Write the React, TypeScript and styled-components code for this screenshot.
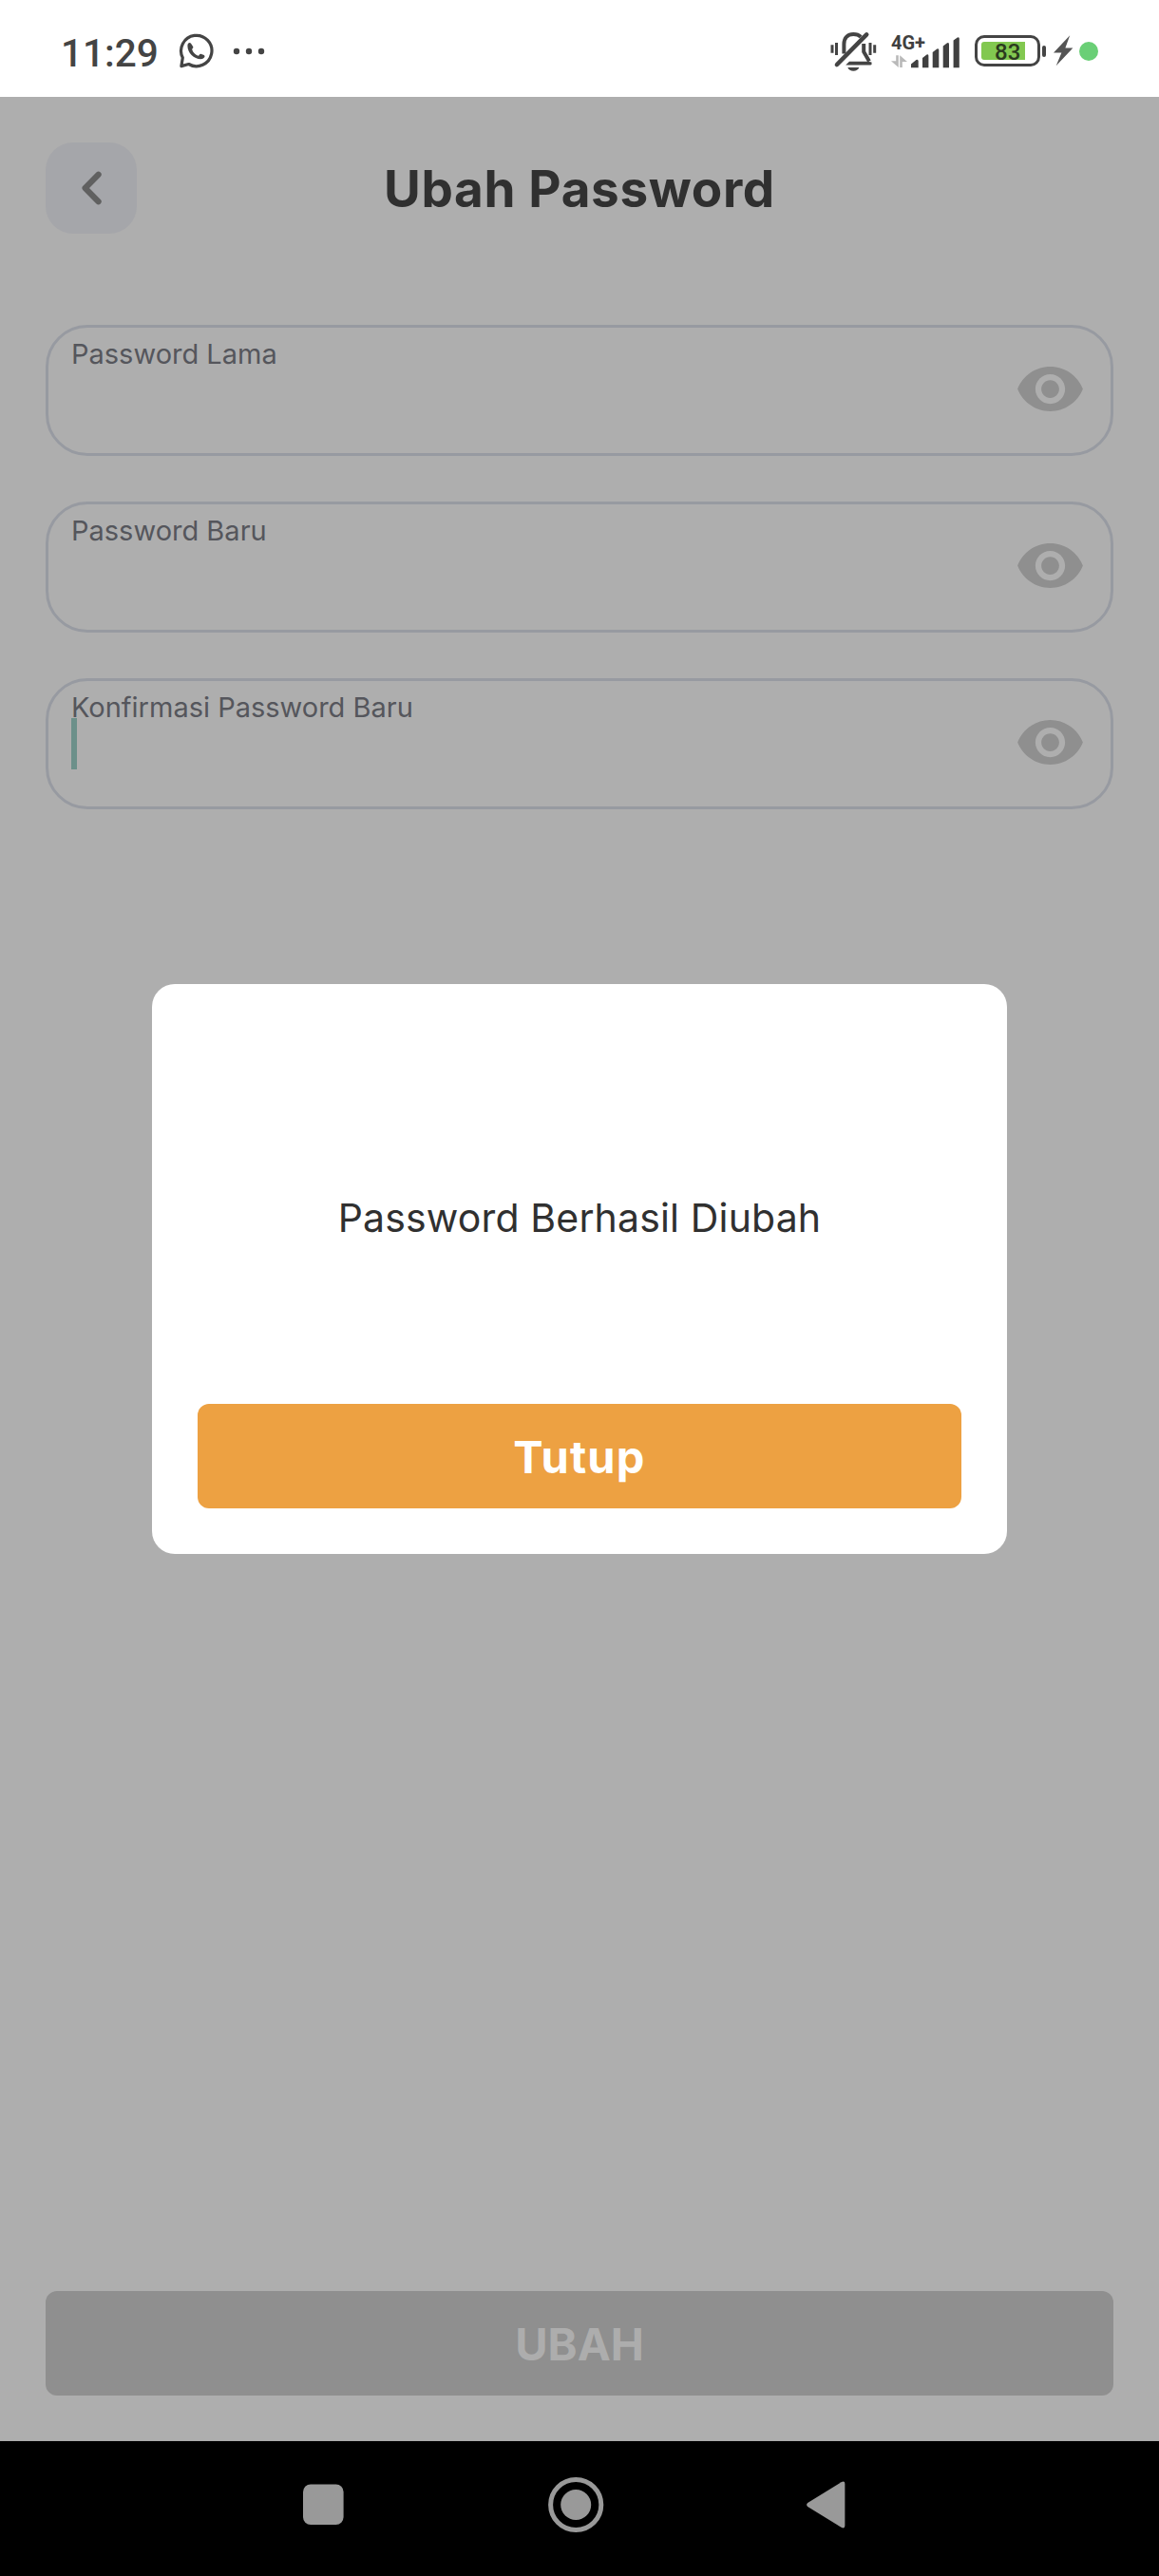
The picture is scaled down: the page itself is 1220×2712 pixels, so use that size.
import React from 'react';
import styled, { createGlobalStyle } from 'styled-components';

const GlobalStyle = createGlobalStyle`
  *, *::before, *::after { box-sizing: border-box; }
  body { margin: 0; background: #aeaeae; }
  button { font: inherit; border: 0; padding: 0; margin: 0; }
`;

const uiFont = `Inter, "Noto Sans", sans-serif`;
const systemFont = `Roboto, "Noto Sans", sans-serif`;

const Phone = styled.div`
  position: relative;
  display: flex;
  flex-direction: column;
  width: 1220px;
  height: 2712px;
  overflow: hidden;
  background: #aeaeae;
  font-family: ${uiFont};
`;

/* ---------- status bar ---------- */

const StatusBar = styled.header`
  display: flex;
  align-items: center;
  justify-content: space-between;
  flex: none;
  height: 102px;
  padding: 5px 64px 0 64px;
  background: #fff;
  color: #444;
  font-family: ${systemFont};
`;

const StatusGroup = styled.div`
  display: flex;
  align-items: center;
`;

const Clock = styled.span`
  width: 103px;
  padding-top: 4px;
  font-size: 40.5px;
  line-height: 48px;
  font-weight: 460;
  white-space: nowrap;
`;

const StatusIcon = styled.svg<{ $gap?: number }>`
  display: block;
  flex: none;
  margin-left: ${(p) => p.$gap ?? 0}px;
`;

const NetworkLabel = styled.text`
  font: 700 20px ${systemFont};
  fill: #404040;
`;

const Battery = styled.div`
  position: relative;
  width: 69px;
  height: 33px;
  margin-left: 15px;
  padding: 4px;
  border: 3px solid #444;
  border-radius: 10px;
`;

const BatteryCharge = styled.div<{ $level: number }>`
  width: ${(p) => p.$level}%;
  height: 19px;
  border-radius: 3px 0 0 3px;
  background: #82c850;
`;

const BatteryLabel = styled.span`
  position: absolute;
  left: 18px;
  top: 1px;
  font-size: 24px;
  line-height: 28px;
  font-weight: 460;
  color: #2b3a1e;
`;

const BatteryTip = styled.div`
  width: 4px;
  height: 12px;
  margin-left: 2px;
  border-radius: 2px;
  background: #444;
`;

const ActiveDot = styled.div`
  width: 20px;
  height: 20px;
  margin-left: 6px;
  border-radius: 50%;
  background: #6acf76;
`;

/* ---------- screen ---------- */

const Screen = styled.main`
  display: flex;
  flex-direction: column;
  flex: 1;
  padding: 48px;
`;

const TitleBar = styled.div`
  display: grid;
  grid-template-columns: 96px 1fr 96px;
  align-items: center;
  height: 96px;
`;

const BackButton = styled.button`
  display: flex;
  align-items: center;
  justify-content: center;
  width: 96px;
  height: 96px;
  border-radius: 29px;
  background: #a5a6aa;
`;

const Title = styled.h1`
  margin: 0;
  padding-top: 2px;
  text-align: center;
  font-size: 53px;
  line-height: 64px;
  font-weight: 650;
  letter-spacing: 0.65px;
  color: #303030;
`;

const Form = styled.form`
  display: flex;
  flex-direction: column;
  gap: 48px;
  margin-top: 96px;
`;

const Field = styled.div`
  display: flex;
  align-items: center;
  justify-content: space-between;
  height: 138px;
  padding: 0 26px 3px 24px;
  border: 3px solid #979aa1;
  border-radius: 44px;
`;

const FieldBody = styled.div`
  display: flex;
  flex-direction: column;
  align-self: stretch;
  padding-top: 10px;
`;

const FieldLabel = styled.label`
  font-size: 29px;
  line-height: 36px;
  color: #55565c;
`;

const Caret = styled.div`
  width: 6px;
  height: 54px;
  margin-top: -7px;
  background: #6c908a;
`;

const Button = styled.button<{ $tone: 'accent' | 'disabled' }>`
  width: 100%;
  height: 110px;
  padding-top: 2px;
  border-radius: 12px;
  background: ${(p) => (p.$tone === 'accent' ? '#eda142' : '#8f8f8f')};
  color: ${(p) => (p.$tone === 'accent' ? '#fff' : '#adadad')};
  font-family: ${uiFont};
  font-size: 47px;
  font-weight: ${(p) => (p.$tone === 'accent' ? 700 : 650)};
  line-height: 60px;
  letter-spacing: ${(p) => (p.$tone === 'accent' ? 1.2 : 0)}px;
`;

const Footer = styled.div`
  margin-top: auto;
`;

/* ---------- dialog ---------- */

const Backdrop = styled.div`
  position: absolute;
  inset: 102px 0 142px;
  display: flex;
  align-items: center;
  justify-content: center;
`;

const Dialog = styled.section`
  display: flex;
  flex-direction: column;
  width: 900px;
  height: 600px;
  padding: 48px;
  border-radius: 24px;
  background: #fff;
`;

const Message = styled.p`
  display: flex;
  flex: 1;
  align-items: center;
  justify-content: center;
  margin: 0;
  padding-top: 2px;
  font-size: 41px;
  line-height: 50px;
  font-weight: 370;
  letter-spacing: 0.15px;
  color: #303030;
`;

/* ---------- navigation bar ---------- */

const NavBar = styled.nav`
  display: flex;
  align-items: center;
  justify-content: space-between;
  flex: none;
  height: 142px;
  padding: 0 330px 9px 319px;
  background: #000;
`;

const NavIcon = styled.svg`
  display: block;
  fill: #999;
`;

function WhatsAppIcon() {
  return (
    <StatusIcon width="38" height="38" viewBox="0 0 38 38" $gap={21} fill="none">
      <path
        d="M2.9 34.6 L4.3 25.8 A16.2 16.2 0 1 1 10.6 32.5 Z"
        stroke="#444"
        strokeWidth="3.2"
        strokeLinejoin="round"
      />
      <path
        d="M9.4 13.2C9.4 10 12 9.2 13.2 11L15.3 14.2C15.8 15.5 14 16.2 14.2 17.2C15.2 20.2 17.8 22.6 20.6 23.7C21.6 23.8 22 21.4 23.4 21.7L26.8 23.1C28.2 24 27.6 26.2 25 27.1C17 28.2 9.4 21 9.4 13.2Z"
        fill="#444"
      />
    </StatusIcon>
  );
}

function MoreIcon() {
  return (
    <StatusIcon width="34" height="8" viewBox="0 0 34 8" $gap={19} fill="#444">
      <circle cx="4" cy="4" r="3.2" />
      <circle cx="17" cy="4" r="3.2" />
      <circle cx="30" cy="4" r="3.2" />
    </StatusIcon>
  );
}

function SilentIcon() {
  return (
    <StatusIcon width="50" height="44" viewBox="0 0 50 44" fill="none" stroke="#444">
      <path d="M14.4 24.5V14.5C14.4 7.5 18.6 3.9 24.3 3.9C27.6 3.9 30.2 4.8 32.2 6.8" strokeWidth="4" />
      <path d="M35.2 14V22.5L41 32.4" strokeWidth="4" />
      <path d="M16.2 36.6L20 32.8H40L43.5 33.5V35.2Q43.5 36.6 42 36.6Z" fill="#444" stroke="none" />
      <path d="M7 36L38.2 4.4" strokeWidth="4.6" strokeLinecap="round" />
      <path d="M18.3 39H30.4Q28.6 42.8 24.3 42.8Q20 42.8 18.3 39Z" fill="#444" stroke="none" />
      <path d="M2 15.2V23.8M6.5 13V26M42 13V26M46.7 15.2V23.8" strokeWidth="3" />
    </StatusIcon>
  );
}

function SignalIcon() {
  return (
    <StatusIcon width="75" height="46" viewBox="-2 -6 75 46" $gap={12} fill="#404040">
      <NetworkLabel x="0" y="15">4G+</NetworkLabel>
      <path d="M5.2 21.3L7.8 21.3V34L0 27.2H5.2Z" fill="#b9b9b9" />
      <path d="M9.2 34V21.3L17 28H11.8V34Z" fill="#b9b9b9" />
      <path d="M21 34.3V30.5L26.5 26Q28.7 25.2 28.7 27.5V34.3Z" />
      <path d="M33 34.3V24L37.5 20.5Q39.4 19.6 39.4 21.8V34.3Z" />
      <path d="M43.7 34.3V18L48.3 14.5Q50.3 13.6 50.3 15.8V34.3Z" />
      <path d="M54.7 34.3V11.5L59 8.2Q61 7.3 61 9.5V34.3Z" />
      <path d="M65.6 34.3V5.5L69.8 2.4Q71.8 1.5 71.8 3.7V34.3Z" />
    </StatusIcon>
  );
}

function ChargingIcon() {
  return (
    <StatusIcon width="21" height="35" viewBox="0 0 21 35" $gap={8} fill="#555">
      <path d="M17.2 1.3L0 19.4H8.4L2.7 33.2L20.4 14.6H12.4Z" />
    </StatusIcon>
  );
}

function EyeIcon() {
  return (
    <svg width="75" height="75" viewBox="0 0 24 24" fill="#8f8f8f">
      <path d="M12 4.5C7 4.5 2.73 7.61 1 12c1.73 4.39 6 7.5 11 7.5s9.27-3.11 11-7.5c-1.73-4.39-6-7.5-11-7.5zM12 17c-2.76 0-5-2.24-5-5s2.24-5 5-5 5 2.24 5 5-2.24 5-5 5zm0-8c-1.66 0-3 1.34-3 3s1.34 3 3 3 3-1.34 3-3-1.34-3-3-3z" />
    </svg>
  );
}

function PasswordField({ label, focused }: { label: string; focused?: boolean }) {
  return (
    <Field>
      <FieldBody>
        <FieldLabel>{label}</FieldLabel>
        {focused && <Caret />}
      </FieldBody>
      <EyeIcon />
    </Field>
  );
}

export default function App() {
  return (
    <>
      <GlobalStyle />
      <Phone>
        <StatusBar>
          <StatusGroup>
            <Clock>11:29</Clock>
            <WhatsAppIcon />
            <MoreIcon />
          </StatusGroup>
          <StatusGroup>
            <SilentIcon />
            <SignalIcon />
            <Battery>
              <BatteryCharge $level={83} />
              <BatteryLabel>83</BatteryLabel>
            </Battery>
            <BatteryTip />
            <ChargingIcon />
            <ActiveDot />
          </StatusGroup>
        </StatusBar>

        <Screen>
          <TitleBar>
            <BackButton type="button" aria-label="Kembali">
              <svg width="96" height="96" viewBox="0 0 96 96" fill="none">
                <path
                  d="M55.6 33.8L41.6 48L55.6 62.2"
                  stroke="#606060"
                  strokeWidth="6.2"
                  strokeLinecap="round"
                  strokeLinejoin="round"
                />
              </svg>
            </BackButton>
            <Title>Ubah Password</Title>
          </TitleBar>

          <Form>
            <PasswordField label="Password Lama" />
            <PasswordField label="Password Baru" />
            <PasswordField label="Konfirmasi Password Baru" focused />
          </Form>

          <Footer>
            <Button type="button" $tone="disabled">UBAH</Button>
          </Footer>
        </Screen>

        <NavBar>
          <NavIcon width="44" height="44" viewBox="0 0 44 44">
            <rect x="0" y="0.5" width="42.6" height="42.6" rx="8" />
          </NavIcon>
          <NavIcon width="60" height="60" viewBox="0 0 60 60">
            <circle cx="30.2" cy="30" r="26.6" fill="none" stroke="#999" strokeWidth="5" />
            <circle cx="30.2" cy="30" r="16" />
          </NavIcon>
          <NavIcon width="41" height="50" viewBox="0 0 41 50">
            <path d="M1.2 23L36.5 1.2Q40.4 -0.6 40.4 3V47Q40.4 50.6 36.5 48.8L1.2 27Q-1 25 1.2 23Z" />
          </NavIcon>
        </NavBar>

        <Backdrop>
          <Dialog role="dialog">
            <Message>Password Berhasil Diubah</Message>
            <Button type="button" $tone="accent">Tutup</Button>
          </Dialog>
        </Backdrop>
      </Phone>
    </>
  );
}
